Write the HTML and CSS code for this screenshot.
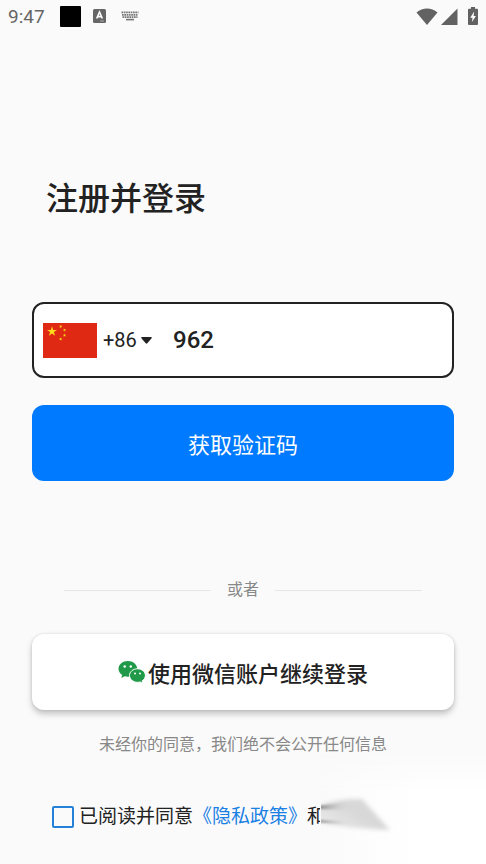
FILE: index.html
```html
<!DOCTYPE html>
<html lang="zh-CN">
<head>
<meta charset="utf-8">
<meta name="viewport" content="width=device-width, initial-scale=1">
<title>注册并登录</title>
<link rel="stylesheet" href="styles.css">
</head>
<body>
<header class="status">
  <div class="status-left">
    <span class="clock">9:47</span>
    <span class="block"></span>
    <svg class="ime" width="13" height="14" viewBox="0 0 13 14" aria-hidden="true"><rect width="13" height="14" rx="1.5" fill="#666"/><path d="M3.7 9.5 6.5 3l2.8 6.5M4.7 7.6h3.6" fill="none" stroke="#fff" stroke-width="1.6"/><path d="M7 12h4" stroke="#aaa" stroke-width="1"/></svg>
    <svg class="keys" width="18" height="10" viewBox="0 0 18 10" aria-hidden="true"><g stroke="#777" stroke-width="1.7" stroke-dasharray="1.7 .6"><path d="M.5 1.3h17M1 3.8h16M1.5 6.2h15"/></g><path d="M5 8.6h8" stroke="#777" stroke-width="1.6"/></svg>
  </div>
  <div class="status-right">
    <svg width="22" height="17" viewBox="0 0 22 17" aria-hidden="true"><path d="M.5 4.5C6.500-.8 15.500-.8 21.500 4.500L11 17z" fill="#626262"/></svg>
    <svg width="17" height="17" viewBox="0 0 17 17" aria-hidden="true"><path d="M16.500.5V17H0z" fill="#626262"/></svg>
    <svg class="battery" width="10" height="18" viewBox="0 0 10 18" aria-hidden="true"><path d="M3 0h4v1.700h2q1 0 1 1V17q0 1-1 1H1q-1 0-1-1V2.700q0-1 1-1h2z" fill="#626262"/><path d="M6.200 4.500 2.200 10.700h2.300L4 15l3.900-6H5.600z" fill="#fff"/></svg>
  </div>
</header>
<main>
  <h1>注册并登录</h1>
  <form>
    <div class="phone">
      <svg class="flag" viewBox="0 0 54 35" width="54" height="35" aria-hidden="true">
        <defs><path id="star" d="M0-1 .225-.309.951-.309.363.118.588.809 0 .382-.588.809-.363.118-.951-.309-.225-.309z" fill="#fddc1c"/></defs>
        <rect width="54" height="35" fill="#df2913"/>
        <use href="#star" transform="translate(9 8.500) scale(5.200)"/>
        <use href="#star" transform="translate(17.700 3.500) rotate(23) scale(1.800)"/>
        <use href="#star" transform="translate(21.500 7) rotate(46) scale(1.800)"/>
        <use href="#star" transform="translate(21.500 12.300) rotate(70) scale(1.800)"/>
        <use href="#star" transform="translate(17.700 16) rotate(21) scale(1.800)"/>
      </svg>
      <select class="code" aria-label="国家代码"><option>+86</option></select>
      <svg class="caret" width="11" height="7" viewBox="0 0 11 7" aria-hidden="true"><path d="M1 0h9q1.400.3.400 1.600L6.300 6.300q-.8.800-1.600 0L.6 1.600Q-.4.300 1 0z" fill="#222"/></svg>
      <input class="number" type="tel" aria-label="手机号" value="962">
    </div>
    <button class="submit" type="button">获取验证码</button>
    <div class="or"><span>或者</span></div>
    <button class="wechat" type="button">
      <svg width="28" height="24" viewBox="0 0 28 24" aria-hidden="true">
        <path d="M9.800 1C4.700 1 .5 4.400.5 8.800c0 2.600 1.400 4.800 3.700 6.200L3.300 18l3.400-1.700c1 .3 2 .4 3.100.4 5.200 0 9.400-3.500 9.400-7.900S15 1 9.800 1z" fill="#209a49"/>
        <path d="M19.500 8.800c-4.500 0-8 3-8 6.700s3.500 6.800 8 6.800c.9 0 1.800-.1 2.600-.4l2.900 1.500-.8-2.600c1.900-1.200 3.200-3.100 3.200-5.300 0-3.700-3.500-6.700-7.900-6.700z" fill="#209a49" stroke="#fff"/>
        <g fill="#fff"><circle cx="6.700" cy="6.500" r="1.200"/><circle cx="12.800" cy="6.500" r="1.200"/><circle cx="17" cy="13.500" r="1"/><circle cx="22" cy="13.500" r="1"/></g>
      </svg>
      <span>使用微信账户继续登录</span>
    </button>
    <p class="note">未经你的同意，我们绝不会公开任何信息</p>
    <div class="agree">
      <input id="agree" type="checkbox">
      <label for="agree">已阅读并同意</label><a href="#privacy">《隐私政策》</a><span>和</span>
    </div>
  </form>
</main>
<svg class="fade" width="166" height="114" viewBox="0 0 166 114" aria-hidden="true">
  <defs>
    <linearGradient id="veil" x1="0" y1="0" x2="1" y2="0"><stop offset="0" stop-color="#fafafa"/><stop offset=".3" stop-color="#fdfdfd"/><stop offset=".6" stop-color="#fff"/></linearGradient>
    <linearGradient id="top" x1="0" y1="0" x2="0" y2="1"><stop offset="0" stop-color="#fff" stop-opacity="0"/><stop offset=".4" stop-color="#fff"/></linearGradient>
    <mask id="edge"><rect width="166" height="114" fill="url(#top)"/></mask>
    <linearGradient id="shade" gradientUnits="userSpaceOnUse" x1="0" y1="74" x2="16" y2="49"><stop offset="0" stop-color="#d8d8d8" stop-opacity=".5"/><stop offset="1" stop-color="#d8d8d8"/></linearGradient>
    <linearGradient id="streak" x1="0" y1="0" x2="1" y2="0"><stop offset="0" stop-color="#777"/><stop offset="1" stop-color="#ccc" stop-opacity="0"/></linearGradient>
    <filter id="soft" x="-20%" y="-50%" width="140%" height="200%"><feGaussianBlur stdDeviation="2"/></filter>
    <filter id="fine" x="-20%" y="-50%" width="140%" height="200%"><feGaussianBlur stdDeviation="1"/></filter>
    <clipPath id="right"><rect x="1" width="165" height="114"/></clipPath>
  </defs>
  <rect width="166" height="114" fill="url(#veil)" mask="url(#edge)"/>
  <g clip-path="url(#right)">
    <path d="M-4 57C12 50 24 49 42 49L70 80C44 79 18 77-4 72z" fill="url(#shade)" filter="url(#soft)"/>
    <path d="M-4 56 28 52 28 60-4 59zM-4 70 28 71 28 75-4 72z" fill="url(#streak)" filter="url(#fine)"/>
  </g>
</svg>
</body>
</html>
```
FILE: styles.css
```css
* { box-sizing: border-box; }
body {
  margin: 0;
  position: relative;
  min-height: 100vh;
  overflow-x: hidden;
  background: #fafafa;
  color: #222;
  font-family: Roboto, "Noto Sans CJK SC", sans-serif;
}
button, input, select { font: inherit; color: inherit; }
.status {
  display: flex;
  justify-content: space-between;
  align-items: center;
  height: 32px;
  padding: 0 8px;
}
.status-left, .status-right { display: flex; align-items: center; }
.status-right { gap: 3px; }
.battery { margin-left: 7px; }
.clock { font-size: 19px; color: #666; }
.block { width: 21px; height: 21px; margin-left: 15px; background: #000; border-radius: 1px; }
.ime { margin-left: 12px; }
.keys { margin-left: 15px; }
main { padding: 142px 32px 0; }
h1 {
  margin: 0 0 78px;
  padding-left: 14px;
  font-size: 32px;
  line-height: 50px;
  font-weight: 500;
}
.phone {
  display: flex;
  align-items: center;
  height: 76px;
  padding: 0 9px;
  border: 2px solid #222;
  border-radius: 12px;
  background: #fff;
}
.flag { flex: none; }
.code {
  appearance: none;
  border: 0;
  padding: 0;
  margin: 0 3px 0 6px;
  width: 35px;
  background: none;
  font-size: 20px;
}
.number {
  flex: 1;
  min-width: 0;
  margin-left: 21px;
  padding: 0;
  border: 0;
  outline: 0;
  background: none;
  font-size: 24px;
  font-weight: 500;
}
.submit, .wechat {
  display: flex;
  align-items: center;
  justify-content: center;
  width: 100%;
  height: 76px;
  border: 0;
  border-radius: 12px;
}
.submit {
  margin-top: 27px;
  background: #007aff;
  color: #fff;
  font-size: 22px;
}
.or {
  display: flex;
  align-items: center;
  gap: 16px;
  margin: 97px 32px 32px;
  color: #888;
  font-size: 16px;
  line-height: 24px;
}
.or::before, .or::after { content: ""; flex: 1; height: 1px; background: #e6e6e6; }
.wechat {
  gap: 2px;
  background: #fff;
  box-shadow: 0 4px 6px rgba(0, 0, 0, .22), 0 0 3px rgba(0, 0, 0, .12);
  font-size: 22px;
  font-weight: 500;
}
.note {
  margin: 23px 0 46px;
  text-align: center;
  color: #888;
  font-size: 16px;
  line-height: 24px;
}
.agree {
  display: flex;
  align-items: center;
  padding-left: 20px;
  font-size: 19px;
  line-height: 28px;
  white-space: nowrap;
}
.agree input {
  appearance: none;
  width: 22px;
  height: 22px;
  margin: 0 5px 0 0;
  border: 2px solid #2481d7;
  border-radius: 2px;
}
.agree a { color: #1b80e4; text-decoration: none; }
.fade { position: absolute; right: 0; bottom: 0; pointer-events: none; }
```
